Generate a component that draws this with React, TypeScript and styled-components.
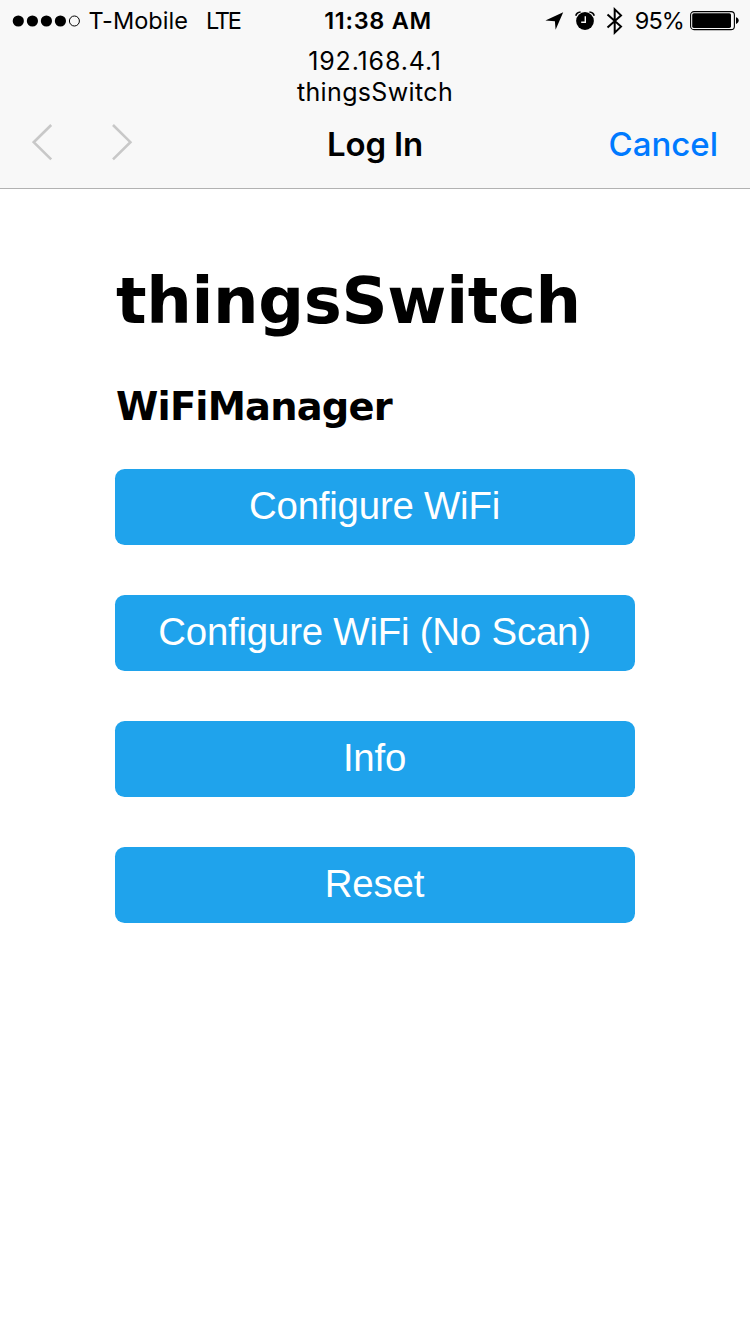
import React from "react";
import styled, { createGlobalStyle } from "styled-components";

const GlobalStyle = createGlobalStyle`
  * { box-sizing: border-box; }
  body {
    margin: 0;
    background: #fff;
    color: #000;
    font-family: Inter, "Liberation Sans", sans-serif;
  }
`;

const Screen = styled.div`
  width: 750px;
  min-height: 1334px;
  background: #fff;
`;

const Header = styled.header`
  height: 189px;
  background: #f8f8f8;
  border-bottom: 1px solid #b2b2b2;
`;

const StatusBar = styled.div`
  display: grid;
  grid-template-columns: 1fr auto 1fr;
  align-items: center;
  height: 41px;
  padding: 0 11px 0 12px;
  font-size: 23.5px;
  line-height: 41px;
  white-space: nowrap;
`;

const StatusGroup = styled.div<{ $end?: boolean }>`
  display: flex;
  align-items: center;
  height: 41px;
  justify-content: ${(p) => (p.$end ? "flex-end" : "flex-start")};
`;

const StatusText = styled.span<{ $gap: number; $tracking?: number }>`
  margin-left: ${(p) => p.$gap}px;
  letter-spacing: ${(p) => p.$tracking ?? 0}px;
`;

const Clock = styled.span`
  padding-left: 5px;
  font-weight: 600;
  letter-spacing: 0.7px;
`;

const Icon = styled.svg<{ $gap?: number }>`
  display: block;
  flex: none;
  margin-left: ${(p) => p.$gap ?? 0}px;
`;

const Address = styled.div`
  padding-top: 5px;
  text-align: center;
  font-size: 25px;
  line-height: 31px;
`;

const AddressLine = styled.div<{ $tracking: number }>`
  letter-spacing: ${(p) => p.$tracking}px;
`;

const NavBar = styled.nav`
  display: grid;
  grid-template-columns: 1fr auto 1fr;
  align-items: center;
  height: 73px;
  padding: 0 32px;
  line-height: 73px;
`;

const Arrows = styled.div`
  display: flex;
  gap: 59px;
  padding-bottom: 5px;
`;

const NavTitle = styled.span`
  font-size: 33px;
  font-weight: 600;
  letter-spacing: -0.2px;
`;

const Cancel = styled.a`
  justify-self: end;
  color: #007aff;
  font-size: 33px;
  font-weight: 500;
`;

const Content = styled.main`
  width: 520px;
  margin: 0 auto;
  padding-top: 72px;
`;

const Title = styled.h1`
  margin: 0 0 0 1px;
  font: bold 64px/80px "DejaVu Sans", sans-serif;
  letter-spacing: -0.33px;
  white-space: nowrap;
`;

const Subtitle = styled.h3`
  margin: 42px 0 38px 1px;
  font: bold 38.4px/48px "DejaVu Sans", sans-serif;
  letter-spacing: -0.8px;
  white-space: nowrap;
`;

const Actions = styled.div`
  display: flex;
  flex-direction: column;
  gap: 50px;
`;

const ActionButton = styled.button`
  display: block;
  width: 100%;
  height: 76px;
  padding: 0 1px 2px 0;
  border: 0;
  border-radius: 9.6px;
  background: #1fa3ec;
  color: #fff;
  font: 38.4px/74px "Liberation Sans", Arial, sans-serif;
  font-variant-ligatures: none;
  letter-spacing: -0.2px;
`;

const Signal = () => (
  <Icon width="69" height="14" viewBox="0 0 69 14">
    {[6.3, 20.4, 34.4, 48.4].map((x) => (
      <circle key={x} cx={x} cy="7" r="5.6" />
    ))}
    <circle cx="62.4" cy="7" r="5" fill="none" stroke="#000" strokeWidth="1" />
  </Icon>
);

const Location = () => (
  <Icon width="19" height="20" viewBox="0 0 19 20">
    <path d="M18.2 1.2 10.6 18.8 9.9 10.2 0.4 9.5Z" />
  </Icon>
);

const Alarm = () => (
  <Icon $gap={11} width="20" height="20" viewBox="0 0 20 20">
    <circle cx="10" cy="10" r="8.9" />
    <path d="M0.8 4.8C1.3 2.6 3 1.2 5.6 1M19.2 4.8C18.7 2.6 17 1.2 14.4 1" fill="none" stroke="#000" strokeWidth="1.6" />
    <path d="M10.3 5.2V11.2H6.2" fill="none" stroke="#f8f8f8" strokeWidth="1.4" />
  </Icon>
);

const Bluetooth = () => (
  <Icon $gap={11} width="18" height="28" viewBox="0 0 18 28">
    <path d="M1.5 7.5 15 19.6 8.7 25.6V2.4L15 8.4 1.5 20.5" fill="none" stroke="#000" strokeWidth="2" />
  </Icon>
);

const Battery = () => (
  <Icon $gap={6} width="49" height="20" viewBox="0 0 49 20">
    <rect x="0.6" y="0.6" width="43.8" height="18" rx="3.4" fill="none" stroke="#000" strokeWidth="1.1" />
    <rect x="2.2" y="2.3" width="38.8" height="14.6" rx="1.6" />
    <path d="M46 6.3C49.6 6.9 49.6 12.3 46 12.9Z" />
  </Icon>
);

const Chevron = ({ flip }: { flip?: boolean }) => (
  <Icon width="21" height="38" viewBox="0 0 21 38">
    <path
      d={flip ? "M1 2 18.4 19.2 1 36.4" : "M19.2 2 1.7 19.2 19.2 36.4"}
      fill="none"
      stroke="#c8c8c8"
      strokeWidth="2.6"
    />
  </Icon>
);

export default function App() {
  return (
    <Screen>
      <GlobalStyle />
      <Header>
        <StatusBar>
          <StatusGroup>
            <Signal />
            <StatusText $gap={7.5} $tracking={0.07}>
              T-Mobile
            </StatusText>
            <StatusText $gap={18} $tracking={-2.3}>
              LTE
            </StatusText>
          </StatusGroup>
          <Clock>11:38 AM</Clock>
          <StatusGroup $end>
            <Location />
            <Alarm />
            <Bluetooth />
            <StatusText $gap={11.2} $tracking={-0.9}>
              95%
            </StatusText>
            <Battery />
          </StatusGroup>
        </StatusBar>
        <Address>
          <AddressLine $tracking={0.85}>192.168.4.1</AddressLine>
          <AddressLine $tracking={0.35}>thingsSwitch</AddressLine>
        </Address>
        <NavBar>
          <Arrows>
            <Chevron />
            <Chevron flip />
          </Arrows>
          <NavTitle>Log In</NavTitle>
          <Cancel>Cancel</Cancel>
        </NavBar>
      </Header>
      <Content>
        <Title>thingsSwitch</Title>
        <Subtitle>WiFiManager</Subtitle>
        <Actions>
          <ActionButton>Configure WiFi</ActionButton>
          <ActionButton>Configure WiFi (No Scan)</ActionButton>
          <ActionButton>Info</ActionButton>
          <ActionButton>Reset</ActionButton>
        </Actions>
      </Content>
    </Screen>
  );
}
